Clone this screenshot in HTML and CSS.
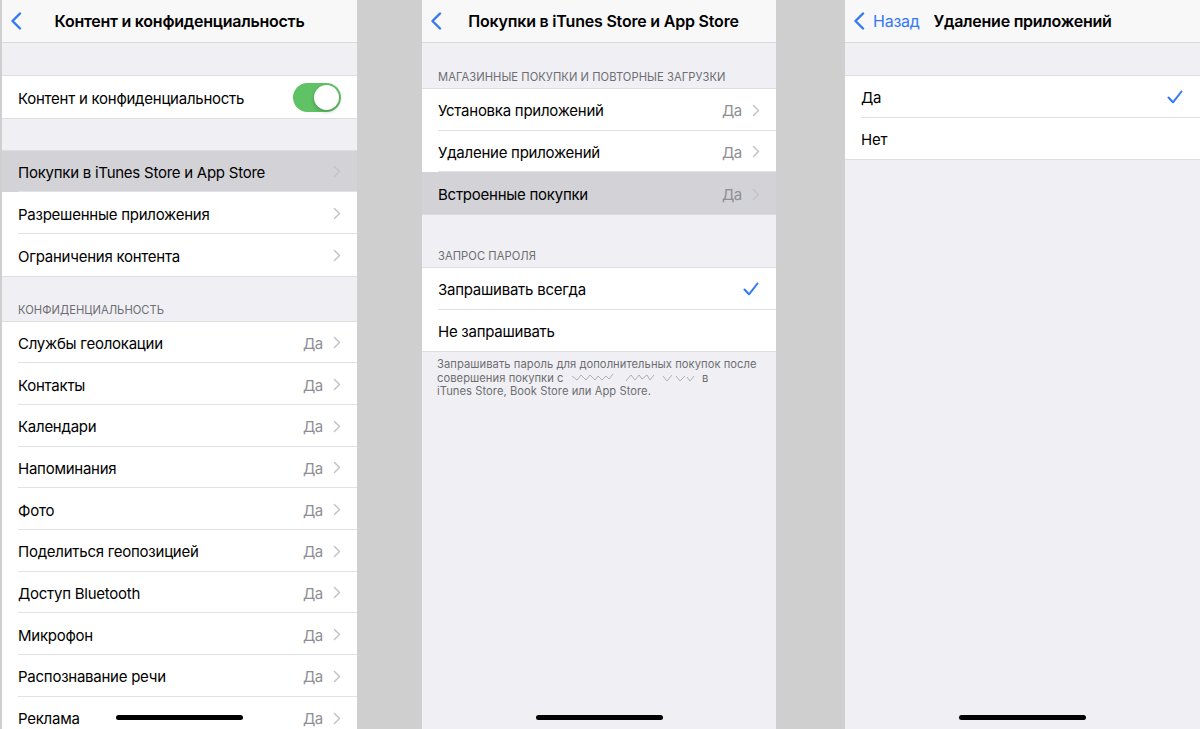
FILE: index.html
```html
<!DOCTYPE html>
<html lang="ru">
<head>
<meta charset="utf-8">
<link rel="stylesheet" href="styles.css">
</head>
<body>
<div class="screens">

  <!-- Screen 1 -->
  <section class="screen s1">
    <header class="nav">
      <span class="back"><svg width="12" height="18" viewBox="0 0 12 18"><path d="M10 1.5L2.5 9l7.5 7.5" fill="none" stroke="#3478f6" stroke-width="2.4" stroke-linecap="round" stroke-linejoin="round"/></svg></span>
      <h1 class="title">Контент и конфиденциальность</h1>
    </header>
    <div class="gap"></div>
    <div class="group">
      <div class="row"><div class="cell"><span class="label">Контент и конфиденциальность</span><span class="toggle"><span class="knob"></span></span></div></div>
    </div>
    <div class="gap"></div>
    <div class="group">
      <div class="row active"><div class="cell"><span class="label">Покупки в iTunes Store и App Store</span><span class="chev"></span></div></div>
      <div class="row"><div class="cell"><span class="label">Разрешенные приложения</span><span class="chev"></span></div></div>
      <div class="row"><div class="cell"><span class="label">Ограничения контента</span><span class="chev"></span></div></div>
    </div>
    <div class="section-head">КОНФИДЕНЦИАЛЬНОСТЬ</div>
    <div class="group">
      <div class="row"><div class="cell"><span class="label">Службы геолокации</span><span class="value">Да</span><span class="chev"></span></div></div>
      <div class="row"><div class="cell"><span class="label">Контакты</span><span class="value">Да</span><span class="chev"></span></div></div>
      <div class="row"><div class="cell"><span class="label">Календари</span><span class="value">Да</span><span class="chev"></span></div></div>
      <div class="row"><div class="cell"><span class="label">Напоминания</span><span class="value">Да</span><span class="chev"></span></div></div>
      <div class="row"><div class="cell"><span class="label">Фото</span><span class="value">Да</span><span class="chev"></span></div></div>
      <div class="row"><div class="cell"><span class="label">Поделиться геопозицией</span><span class="value">Да</span><span class="chev"></span></div></div>
      <div class="row"><div class="cell"><span class="label">Доступ Bluetooth</span><span class="value">Да</span><span class="chev"></span></div></div>
      <div class="row"><div class="cell"><span class="label">Микрофон</span><span class="value">Да</span><span class="chev"></span></div></div>
      <div class="row"><div class="cell"><span class="label">Распознавание речи</span><span class="value">Да</span><span class="chev"></span></div></div>
      <div class="row"><div class="cell"><span class="label">Реклама</span><span class="value">Да</span><span class="chev"></span></div></div>
    </div>
    <div class="home"></div>
  </section>

  <!-- Screen 2 -->
  <section class="screen s2">
    <header class="nav">
      <span class="back"><svg width="12" height="18" viewBox="0 0 12 18"><path d="M10 1.5L2.5 9l7.5 7.5" fill="none" stroke="#3478f6" stroke-width="2.4" stroke-linecap="round" stroke-linejoin="round"/></svg></span>
      <h1 class="title shifted">Покупки в iTunes Store и App Store</h1>
    </header>
    <div class="section-head">МАГАЗИННЫЕ ПОКУПКИ И ПОВТОРНЫЕ ЗАГРУЗКИ</div>
    <div class="group">
      <div class="row"><div class="cell"><span class="label">Установка приложений</span><span class="value">Да</span><span class="chev"></span></div></div>
      <div class="row"><div class="cell"><span class="label">Удаление приложений</span><span class="value">Да</span><span class="chev"></span></div></div>
      <div class="row active"><div class="cell"><span class="label">Встроенные покупки</span><span class="value">Да</span><span class="chev"></span></div></div>
    </div>
    <div class="section-head tall">ЗАПРОС ПАРОЛЯ</div>
    <div class="group">
      <div class="row"><div class="cell"><span class="label">Запрашивать всегда</span><span class="check"><svg width="16" height="14" viewBox="0 0 16 14"><path d="M1.5 7.5l4.5 4.8L14.5 1.5" fill="none" stroke="#3478f6" stroke-width="2" stroke-linecap="round" stroke-linejoin="round"/></svg></span></div></div>
      <div class="row"><div class="cell"><span class="label">Не запрашивать</span></div></div>
    </div>
    <p class="footer">Запрашивать пароль для дополнительных покупок после совершения покупки с <svg class="scribble" width="126" height="8" viewBox="0 0 126 8"><path d="M2 2l5 4 4-5 5 5 4-5 5 5 3-4 4 4 4-4 3 3 4-5M56 7l5-6 4 5 4-5 3 4 5-4 3 5 4-5M93 2l4 5 5-6M106 2l4 5 5-5M117 3l3 4 4-5" fill="none" stroke="#a8a8ae" stroke-width="0.9"/></svg> в<br>iTunes Store, Book Store или App Store.</p>
    <div class="home"></div>
  </section>

  <!-- Screen 3 -->
  <section class="screen s3">
    <header class="nav">
      <span class="back"><svg width="12" height="18" viewBox="0 0 12 18"><path d="M10 1.5L2.5 9l7.5 7.5" fill="none" stroke="#3478f6" stroke-width="2.4" stroke-linecap="round" stroke-linejoin="round"/></svg><span class="back-text">Назад</span></span>
      <h1 class="title">Удаление приложений</h1>
    </header>
    <div class="gap"></div>
    <div class="group">
      <div class="row"><div class="cell"><span class="label">Да</span><span class="check"><svg width="16" height="14" viewBox="0 0 16 14"><path d="M1.5 7.5l4.5 4.8L14.5 1.5" fill="none" stroke="#3478f6" stroke-width="2" stroke-linecap="round" stroke-linejoin="round"/></svg></span></div></div>
      <div class="row"><div class="cell"><span class="label">Нет</span></div></div>
    </div>
    <div class="home"></div>
  </section>

</div>
</body>
</html>
```

FILE: styles.css
```css
* { box-sizing: border-box; margin: 0; padding: 0; }

html, body {
  width: 1200px;
  height: 729px;
  overflow: hidden;
  background: #cfcfcf;
  font-family: "Inter", "Noto Sans", sans-serif;
  color: #000;
}

.screens {
  display: flex;
  height: 729px;
  padding-left: 2px;
}

.screen {
  position: relative;
  height: 729px;
  overflow: hidden;
  background: #f0f0f4;
  display: flex;
  flex-direction: column;
  flex: none;
}

.s1 { width: 355px; }
.s2 { width: 354px; margin-left: 65px; }
.s3 { width: 355px; margin-left: 69px; }

.nav {
  position: relative;
  height: 43px;
  flex: none;
  background: #f8f8f9;
  border-bottom: 1px solid #d9d9dc;
  display: flex;
  align-items: center;
  justify-content: center;
}

.back {
  position: absolute;
  left: 8px;
  top: 12px;
  display: flex;
  align-items: center;
  gap: 8px;
}

.back-text {
  color: #3478f6;
  font-size: 16px;
  letter-spacing: -0.25px;
  line-height: 18px;
}

.title {
  font-size: 16px;
  font-weight: 600;
  letter-spacing: -0.25px;
  line-height: 20px;
  margin-top: -1px;
}
.title.shifted { margin-left: 9px; letter-spacing: -0.2px; }

.gap { height: 33px; flex: none; }

.section-head {
  height: 46px;
  flex: none;
  display: flex;
  align-items: flex-end;
  padding: 0 0 5px 16px;
  font-size: 11.2px;
  line-height: 14px;
  color: #6d6d72;
  letter-spacing: 0.05px;
}
.section-head.tall { height: 54px; }

.group {
  background: #fff;
  box-shadow: 0 -1px 0 #dedee2, 0 1px 0 #dedee2;
  flex: none;
}

.row {
  height: 41.67px;
  padding-left: 16px;
}
.row.active { background: #d2d2d7; }

.cell {
  height: 100%;
  display: flex;
  align-items: center;
  padding-right: 16px;
  border-bottom: 1px solid #e2e2e6;
}
.row:last-child .cell { border-bottom: none; }

.label {
  flex: 1;
  font-size: 15px;
  letter-spacing: -0.25px;
  white-space: nowrap;
  padding-top: 3px;
}

.value {
  color: #8e8e93;
  font-size: 15px;
  letter-spacing: -0.3px;
  margin-right: 10px;
  padding-top: 3px;
}

.chev {
  width: 8px;
  height: 13px;
  margin-top: 2px;
  background: no-repeat center / 8px 13px url("data:image/svg+xml,%3Csvg xmlns='http://www.w3.org/2000/svg' width='8' height='13' viewBox='0 0 8 13'%3E%3Cpath d='M1.5 1.5l5 5-5 5' fill='none' stroke='%23c4c4c8' stroke-width='1.5' stroke-linecap='round' stroke-linejoin='round'/%3E%3C/svg%3E");
}

.check { display: flex; margin-right: 1px; margin-top: 1px; }

.toggle {
  width: 48px;
  height: 29px;
  border-radius: 15px;
  background: #5fc264;
  display: flex;
  align-items: center;
  justify-content: flex-end;
  padding: 2px;
  margin-top: 1px;
}
.knob {
  width: 25px;
  height: 25px;
  border-radius: 50%;
  background: #fff;
  box-shadow: 0 2px 4px rgba(0,0,0,0.2);
}

.footer {
  padding: 7px 16px 0 15px;
  font-size: 11.2px;
  line-height: 13.6px;
  color: #6d6d72;
  letter-spacing: 0.05px;
}
.scribble { vertical-align: 0; margin: 0 3px; }

.home {
  position: absolute;
  left: 114px;
  top: 715px;
  width: 127px;
  height: 5px;
  border-radius: 3px;
  background: #000;
}
```
